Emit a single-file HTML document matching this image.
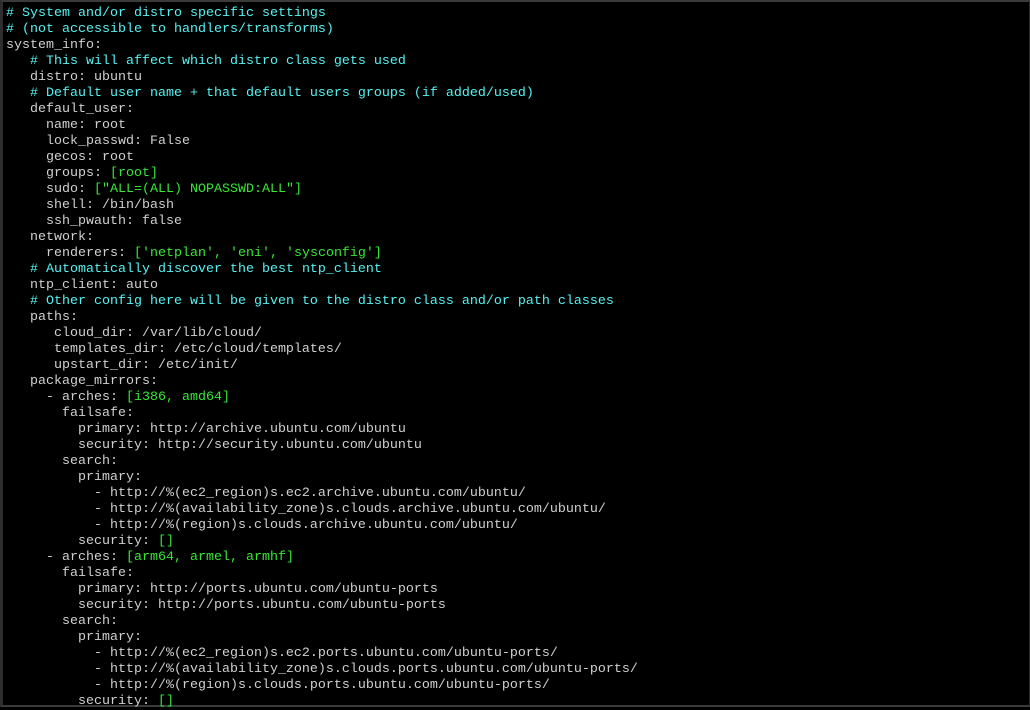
<!DOCTYPE html>
<html><head><style>
html,body{margin:0;padding:0;background:#000;}
body{width:1030px;height:707px;overflow:hidden;position:relative;}
.frame{position:absolute;left:0;top:0;width:1030px;height:707px;box-sizing:border-box;border-top:2px solid #3a3a3a;border-left:3px solid #2e2e2e;border-right:1px solid #2e2e2e;border-bottom:2px solid #3a3a3a;}
pre{position:absolute;left:6px;top:6px;margin:0;font-family:"Liberation Mono",monospace;font-size:13.33px;line-height:16px;color:#d0d0d0;white-space:pre;}
.c{color:#54f2f2;}
.g{color:#36e636;}
</style></head><body><div class="frame"></div>
<pre><span class="c"># System and/or distro specific settings</span>
<span class="c"># (not accessible to handlers/transforms)</span>
system_info:
   <span class="c"># This will affect which distro class gets used</span>
   distro: ubuntu
   <span class="c"># Default user name + that default users groups (if added/used)</span>
   default_user:
     name: root
     lock_passwd: False
     gecos: root
     groups: <span class="g">[root]</span>
     sudo: <span class="g">["ALL=(ALL) NOPASSWD:ALL"]</span>
     shell: /bin/bash
     ssh_pwauth: false
   network:
     renderers: <span class="g">['netplan', 'eni', 'sysconfig']</span>
   <span class="c"># Automatically discover the best ntp_client</span>
   ntp_client: auto
   <span class="c"># Other config here will be given to the distro class and/or path classes</span>
   paths:
      cloud_dir: /var/lib/cloud/
      templates_dir: /etc/cloud/templates/
      upstart_dir: /etc/init/
   package_mirrors:
     - arches: <span class="g">[i386, amd64]</span>
       failsafe:
         primary: http://archive.ubuntu.com/ubuntu
         security: http://security.ubuntu.com/ubuntu
       search:
         primary:
           - http://%(ec2_region)s.ec2.archive.ubuntu.com/ubuntu/
           - http://%(availability_zone)s.clouds.archive.ubuntu.com/ubuntu/
           - http://%(region)s.clouds.archive.ubuntu.com/ubuntu/
         security: <span class="g">[]</span>
     - arches: <span class="g">[arm64, armel, armhf]</span>
       failsafe:
         primary: http://ports.ubuntu.com/ubuntu-ports
         security: http://ports.ubuntu.com/ubuntu-ports
       search:
         primary:
           - http://%(ec2_region)s.ec2.ports.ubuntu.com/ubuntu-ports/
           - http://%(availability_zone)s.clouds.ports.ubuntu.com/ubuntu-ports/
           - http://%(region)s.clouds.ports.ubuntu.com/ubuntu-ports/
         security: <span class="g">[]</span></pre>
</body></html>
